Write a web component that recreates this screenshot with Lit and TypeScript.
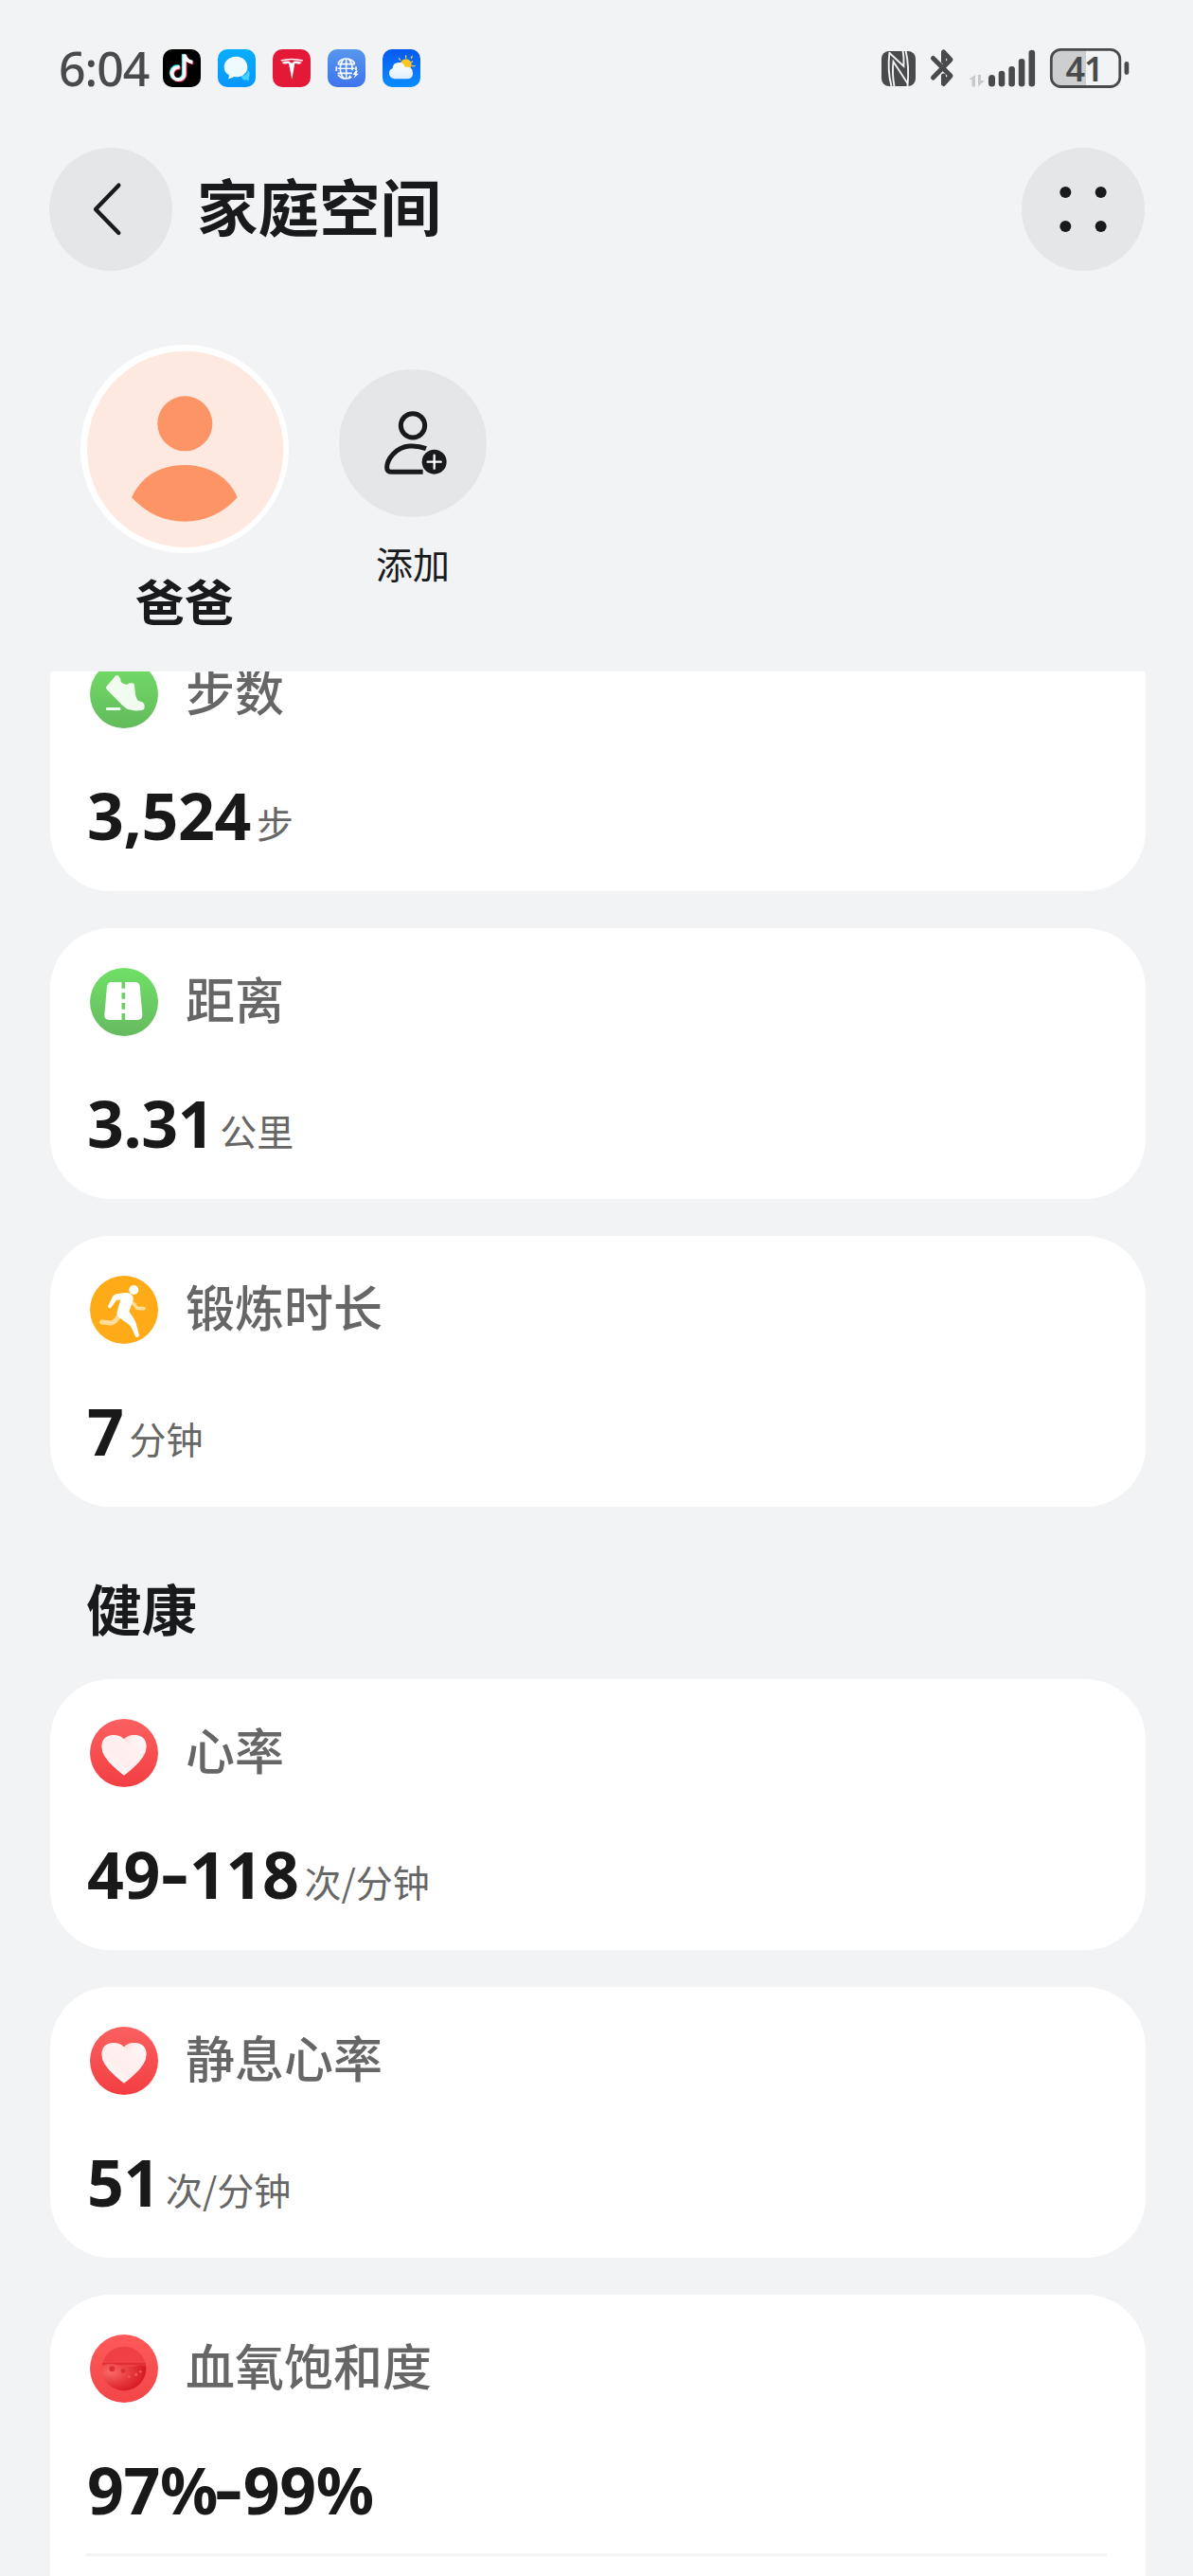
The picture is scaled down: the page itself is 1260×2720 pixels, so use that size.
import { LitElement, html, css, svg, nothing, type TemplateResult } from "lit";
import { customElement, property } from "lit/decorators.js";

type IconName = "steps" | "distance" | "exercise" | "heart" | "oxygen";

interface Metric {
  icon: IconName;
  label: string;
  value: string;
  unit?: string;
}

const ACTIVITY: Metric[] = [
  { icon: "steps", label: "步数", value: "3,524", unit: "步" },
  { icon: "distance", label: "距离", value: "3.31", unit: "公里" },
  { icon: "exercise", label: "锻炼时长", value: "7", unit: "分钟" },
];

const HEALTH: Metric[] = [
  { icon: "heart", label: "心率", value: "49-118", unit: "次/分钟" },
  { icon: "heart", label: "静息心率", value: "51", unit: "次/分钟" },
  { icon: "oxygen", label: "血氧饱和度", value: "97%-99%" },
];

const gradient = (id: string, from: string, to: string) => svg`
  <linearGradient id=${id} x1="0" y1="0" x2="0" y2="1">
    <stop offset="0" stop-color=${from} /><stop offset="1" stop-color=${to} />
  </linearGradient>`;

const GLYPHS: Record<IconName, TemplateResult> = {
  steps: svg`
    <defs>${gradient("g", "#74dd68", "#62bb5c")}</defs>
    <circle cx="108" cy="108" r="108" fill="url(#g)" />
    <path fill="#f1fbf0" d="M52 84 L80 51 Q87 45 92 52 Q98 58 98 70 Q108 78 118 77 Q124 71 131 73 Q140 71 141 80 L144 108 Q147 131 162 131 Q174 135 173 147 Q174 158 164 159 Q140 162 125 157 Q116 155 103 143 L54 94 Q49 89 52 84Z" />
    <rect x="51" y="150" width="46" height="9" rx="3" fill="#f1fbf0" />`,
  distance: svg`
    <defs>${gradient("g", "#6fe067", "#66ba60")}</defs>
    <circle cx="108" cy="108" r="108" fill="url(#g)" />
    <path fill="#fff" d="M70 45 H143 Q156 45 158 58 L166 148 Q167 165 150 165 H61 Q45 165 46 148 L54 58 Q56 45 70 45Z" />
    <path stroke="#6dcd66" stroke-width="11" d="M106 44V65M106 79V98M106 111V131M106 144V166" />`,
  exercise: svg`
    <circle cx="108" cy="108" r="108" fill="#ffab17" />
    <g fill="none" stroke="#ffdc98" stroke-linecap="round" stroke-linejoin="round">
      <path stroke-width="11" d="M138 88 L150 103 L171 104" />
      <path stroke-width="15" d="M90 130 Q78 150 66 150 L38 147" />
    </g>
    <circle cx="139" cy="45" r="15" fill="#fff" />
    <path fill="#fff" d="M57 97 L72 66 Q76 60 84 58 L112 54 Q130 53 136 66 Q139 73 134 87 L124 113 L139 136 Q145 145 149 161 L156 188 Q155 197 145 194 L132 166 Q129 158 121 153 L92 132 Q82 124 87 111 L97 76 L84 78 L66 102 Q59 105 57 97Z" />`,
  heart: svg`
    <defs>${gradient("g", "#fb6060", "#f33e42")}
      <linearGradient id="h" x1="1" y1="0" x2="0.2" y2="0.9">
        <stop offset="0" stop-color="#fffafa" /><stop offset="0.35" stop-color="#fff1ef" />
        <stop offset="0.7" stop-color="#fdeeee" /><stop offset="1" stop-color="#fffafa" />
      </linearGradient>
      <linearGradient id="f" x1="0" y1="0" x2="0.7" y2="0.3">
        <stop offset="0" stop-color="#f9cfca" /><stop offset="1" stop-color="#fdeeec" stop-opacity="0" />
      </linearGradient>
    </defs>
    <circle cx="108" cy="108" r="108" fill="url(#g)" />
    <path fill="url(#h)" d="M108 179 Q98 172 80 156 Q37 119 37 88 Q38 52 74 51 Q96 51 108 64 Q120 51 142 51 Q178 52 179 88 Q179 119 136 156 Q118 172 108 179Z" />
    <path fill="url(#f)" d="M108 64 Q120 51 142 51 Q170 54 176 74 L126 86 Q112 74 108 64Z" />`,
  oxygen: svg`
    <defs>${gradient("g", "#fe5a59", "#f24648")}
      <radialGradient id="b" cx="0.2" cy="0.3" r="0.85">
        <stop offset="0" stop-color="#fb6a68" /><stop offset="0.55" stop-color="#e5383b" /><stop offset="1" stop-color="#d4161d" />
      </radialGradient>
    </defs>
    <circle cx="108" cy="108" r="108" fill="url(#g)" />
    <circle cx="108" cy="108" r="70" fill="#ef4145" />
    <path fill="#e02f35" d="M40 90 H176 L178 104 Q150 92 110 96 Q60 92 38 104Z" />
    <path fill="url(#b)" d="M38 98 Q60 88 86 96 Q120 108 148 99 Q164 96 178 103 A70 70 0 0 1 38 112Z" />
    <g fill="#d92f36"><circle cx="70" cy="109" r="9" /><circle cx="105" cy="115" r="7" /></g>
    <g fill="#f0595b"><circle cx="146" cy="127" r="5" /><circle cx="124" cy="134" r="4" /><circle cx="160" cy="118" r="4" /></g>`,
};

const APP_ICONS: TemplateResult[] = [
  svg`
    <rect width="120" height="120" rx="30" fill="#000" />
    <g fill="none" stroke-width="11">
      <path stroke="#25f4ee" d="M51 55 C32 51 24 68 27 80 C31 100 63 102 65 77 V16 Q71 36 91 40" />
      <path stroke="#fe2c55" d="M56 60 C38 57 29 72 32 84 C36 103 69 104 71 81 V20 Q76 41 97 44" />
      <path stroke="#fff" d="M53 57 C36 54 27 70 30 81 C34 101 66 102 68 79 V17 Q74 38 94 41" />
    </g>`,
  svg`
    <defs><linearGradient id="m" x2="0" y2="1"><stop stop-color="#08adfb" /><stop offset="1" stop-color="#0797ff" /></linearGradient></defs>
    <rect width="120" height="120" rx="30" fill="url(#m)" />
    <path fill="#45d3fb" d="M74 84 Q98 83 94 64 Q106 78 98 90 L99 99 L90 97 Q78 100 74 84Z" />
    <path fill="#eefafe" d="M57 23 C80 23 94 38 94 57 C94 77 77 88 57 88 L52 87 Q42 93 33 94 Q37 87 35 81 C24 75 20 66 20 56 C20 38 36 23 57 23Z" />`,
  svg`
    <rect width="120" height="120" rx="30" fill="#e31937" />
    <g fill="#fff">
      <path d="M25 34 Q60 24 96 34 L94 38 Q60 29 28 38Z" />
      <path d="M29 42 Q42 37 52 38 L60 44 L68 38 Q80 37 92 42 Q87 49 78 46 L70 45 L61 95 L51 45 L43 46 Q33 48 29 42Z" />
    </g>`,
  svg`
    <defs><linearGradient id="w" x2="0" y2="1"><stop stop-color="#5797ec" /><stop offset="1" stop-color="#3e74ee" /></linearGradient></defs>
    <rect width="120" height="120" rx="30" fill="url(#w)" />
    <g fill="none" stroke="#fff" stroke-width="5">
      <path d="M86 44 Q76 30 59 30 Q42 30 33 44 M33 80 Q42 93 59 93 Q70 92 76 88" />
      <path d="M51 31 Q40 43 40 61 Q40 80 51 92 M67 31 Q78 43 78 61 V67 M67 92 L72 83 M59 30V93" />
      <path d="M32 47H87 M32 76H78" />
      <path d="M28 55V69M90 55V66" />
    </g>
    <path stroke="#fff" stroke-width="4" d="M32 61H86" />
    <path fill="#fff" d="M90 66 L80 81 H87 L83 92 L98 77 H91 L96 68Z" />`,
  svg`
    <defs>
      <linearGradient id="s" x2="0" y2="1"><stop stop-color="#0759ee" /><stop offset="1" stop-color="#0a8dff" /></linearGradient>
      <linearGradient id="c" x2="0" y2="1"><stop stop-color="#fff" /><stop offset="1" stop-color="#dfeefd" /></linearGradient>
    </defs>
    <rect width="120" height="120" rx="30" fill="url(#s)" />
    <path stroke="#f3c65a" stroke-width="4" stroke-linecap="round" d="M74 20V27M94 22L91 28M52 29L56 34M95 39L89 42M94 53H102" />
    <circle cx="74" cy="49" r="18" fill="#fbc524" />
    <path fill="url(#c)" d="M42 94 C28 94 21 86 21 76 Q21 64 32 61 Q33 42 52 42 Q67 42 72 57 Q96 53 96 76 Q96 94 78 94Z" />`,
];

@customElement("metric-card")
class MetricCard extends LitElement {
  @property({ attribute: false }) metric!: Metric;

  static styles = css`
    :host {
      display: block;
      box-sizing: border-box;
      height: 286px;
      padding: 42px 40px 0 42px;
      border-radius: 64px;
      background: #fff;
      color: #191919;
    }
    .head { display: flex; align-items: center; gap: 29px; height: 72px; }
    .icon { flex: none; width: 72px; height: 72px; display: block; }
    .label {
      font-size: 52px;
      line-height: 72px;
      font-weight: 500;
      color: #666;
      padding-bottom: 9px;
    }
    .reading { display: flex; align-items: baseline; height: 100px; margin: 42px 0 0 -3px; gap: 6px; white-space: nowrap; }
    .value { font-family: "Noto Sans", sans-serif; font-size: 68px; font-weight: 700; line-height: 100px; letter-spacing: -0.4px; }
    .dash { display: inline-block; width: 31px; text-align: center; letter-spacing: 0; transform: translateY(-2px) scaleX(1.35); }
    .percent { letter-spacing: -4.500px; }
    .unit { font-size: 39px; color: #666; line-height: 50px; transform: translateY(-2px); }
  `;

  private glyphs(value: string) {
    return value.split(/([-%])/).map((part) =>
      part === "-" ? html`<span class="dash">-</span>`
        : part === "%" ? html`<span class="percent">%</span>`
        : part);
  }

  render() {
    const m = this.metric;
    return html`
      <div class="head">
        <svg class="icon" viewBox="0 0 216 216">${GLYPHS[m.icon]}</svg>
        <span class="label">${m.label}</span>
      </div>
      <div class="reading">
        <span class="value">${this.glyphs(m.value)}</span>
        ${m.unit ? html`<span class="unit">${m.unit}</span>` : nothing}
      </div>
    `;
  }
}

@customElement("status-bar")
class StatusBar extends LitElement {
  static styles = css`
    :host { display: flex; justify-content: space-between; box-sizing: border-box; height: 144px; padding: 30px 40px 0 62px; color: #494a4c; }
    .left, .right { display: flex; align-items: center; height: 84px; }
    .time { font: 500 50px/84px "Noto Sans", sans-serif; width: 110px; letter-spacing: -1px; }
    .apps { display: flex; gap: 18px; }
    .app { width: 40px; height: 40px; display: block; }
    .signals { width: 320px; height: 90px; display: block; }
    .right { height: 90px; }
    .level { font: 600 36px "Noto Sans", sans-serif; letter-spacing: -1px; }
  `;

  render() {
    return html`
      <div class="left">
        <span class="time">6:04</span>
        <div class="apps">
          ${APP_ICONS.map((g) => html`<svg class="app" viewBox="0 0 120 120">${g}</svg>`)}
        </div>
      </div>
      <div class="right">
        <svg class="signals" viewBox="0 0 320 90" fill="#494a4c">
          <rect x="31" y="24" width="36" height="37" rx="8" />
          <g fill="none" stroke="#f1f3f5" stroke-width="1.900">
            <path d="M39.500 25 Q37 44 41.500 61" />
            <path d="M39.500 26 L54.500 40 Q55 31 53.500 23" />
            <path d="M44.500 61 Q42 48 43.500 35 L58.500 58" />
            <path d="M56.500 23 Q60.500 40 58.500 61" />
          </g>
          <path fill="none" stroke="#494a4c" stroke-width="5" stroke-linejoin="round" stroke-linecap="round" d="M85.500 31.500 L104 50 L96.500 58.500 V50 M85.500 52 L104 33 L96.500 25 V35" />
          <path fill="#c9cacc" d="M123 54 L130 49 V61.500 H126.500 V54Z M133 49 H136 V55 H140 L133 61.500Z" />
          <rect x="144" y="49" width="7" height="12.500" rx="3.500" />
          <rect x="154.700" y="44.700" width="6.600" height="16.800" rx="3.300" />
          <rect x="165.300" y="40" width="6.600" height="21.500" rx="3.300" />
          <rect x="175.800" y="32" width="6.600" height="29.500" rx="3.300" />
          <rect x="186.500" y="22.700" width="6.600" height="38.800" rx="3.300" />
          <path fill="#cdced0" d="M220 23 H247 V61 H220 Q210.500 61 210.500 51 V33 Q210.500 23 220 23Z" />
          <rect x="210.300" y="22.300" width="72.500" height="39.200" rx="10" fill="none" stroke="#494a4c" stroke-width="2.800" />
          <rect x="287.500" y="35" width="4.800" height="14" rx="2.400" />
          <text class="level" x="225.500" y="55.500">41</text>
        </svg>
      </div>
    `;
  }
}

@customElement("app-root")
class AppRoot extends LitElement {
  static styles = css`
    :host {
      display: flex;
      flex-direction: column;
      width: 1260px;
      height: 2720px;
      overflow: hidden;
      background: #f1f3f5;
      color: #191a1c;
      font-family: "Noto Sans CJK SC", sans-serif;
    }
    .bar { display: flex; align-items: center; gap: 26px; height: 130px; padding: 12px 51px 0 52px; }
    .round { width: 130px; height: 130px; display: block; flex: none; }
    .title { flex: 1; margin: 0; font-size: 64.500px; line-height: 96px; font-weight: 700; padding-bottom: 11px; }
    .members { display: flex; height: 423px; }
    .member { display: flex; flex-direction: column; align-items: center; }
    .self { width: 220px; margin: 78px 0 0 85px; }
    .avatar { width: 220px; height: 220px; display: block; }
    .name { font-size: 52px; font-weight: 700; line-height: 76px; margin-top: 12px; }
    .add { width: 156px; margin: 104px 0 0 53px; }
    .plus { width: 156px; height: 156px; display: block; }
    .action { font-size: 39px; line-height: 56px; margin-top: 20px; }
    .scroll { flex: 1; min-height: 0; overflow: hidden; }
    .list { display: flex; flex-direction: column; gap: 39px; padding: 0 50px 0 53px; }
    .activity { margin-top: -54px; }
    .section { margin: 0; padding: 64px 92px 0 91px; height: 118px; line-height: 84px; font-size: 58.500px; font-weight: 700; }
    .last { background: #fff; border-radius: 64px 64px 0 0; }
    .divider { height: 3px; margin: -13px 41px 0 38px; background: #f3f3f3; }
    .rest { height: 60px; }
  `;

  render() {
    return html`
      <status-bar></status-bar>
      <header class="bar">
        <svg class="round" viewBox="0 0 390 390">
          <circle cx="195" cy="195" r="195" fill="#e5e6e8" />
          <path d="M220 119 L147 195 L220 270" fill="none" stroke="#191a1c" stroke-width="13" stroke-linecap="round" stroke-linejoin="round" />
        </svg>
        <h1 class="title">家庭空间</h1>
        <svg class="round" viewBox="0 0 390 390">
          <circle cx="195" cy="195" r="195" fill="#e5e6e8" />
          <g fill="#191a1c">
            <circle cx="139" cy="141" r="18" /><circle cx="251" cy="141" r="18" />
            <circle cx="139" cy="249" r="18" /><circle cx="251" cy="249" r="18" />
          </g>
        </svg>
      </header>
      <section class="members">
        <div class="member self">
          <svg class="avatar" viewBox="0 0 660 660">
            <circle cx="330" cy="330" r="330" fill="#fff" />
            <circle cx="332" cy="331" r="311" fill="#fee9e0" />
            <circle cx="331" cy="250" r="87" fill="#fd9466" />
            <path fill="#fd9466" d="M162 484 C196 410 260 381 331 381 C402 381 470 416 497 484 C450 535 395 560 331 560 C265 560 212 536 162 484Z" />
          </svg>
          <span class="name">爸爸</span>
        </div>
        <div class="member add">
          <svg class="plus" viewBox="0 0 468 468">
            <circle cx="234" cy="234" r="234" fill="#e5e6e8" />
            <g fill="none" stroke="#191a1c" stroke-width="15">
              <circle cx="234" cy="178" r="38" />
              <path d="M276 251 C256 243 238 242 224 243 C180 246 152 285 152 311 Q152 325 168 325 H266" />
            </g>
            <circle cx="302" cy="293" r="39" fill="#191a1c" />
            <path d="M302 272V314M281 293H323" stroke="#fff" stroke-width="7" stroke-linecap="round" />
          </svg>
          <span class="action">添加</span>
        </div>
      </section>
      <main class="scroll">
        <div class="list activity">
          ${ACTIVITY.map((m) => html`<metric-card .metric=${m}></metric-card>`)}
        </div>
        <h2 class="section">健康</h2>
        <div class="list">
          ${HEALTH.slice(0, 2).map((m) => html`<metric-card .metric=${m}></metric-card>`)}
          <div class="last">
            <metric-card .metric=${HEALTH[2]}></metric-card>
            <div class="divider"></div>
            <div class="rest"></div>
          </div>
        </div>
      </main>
    `;
  }
}
